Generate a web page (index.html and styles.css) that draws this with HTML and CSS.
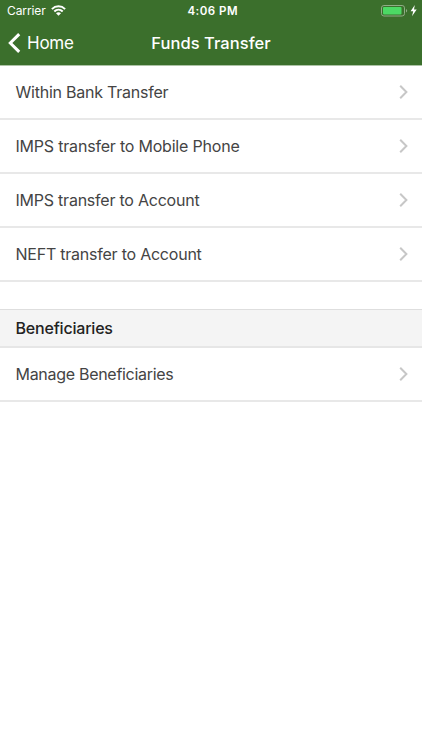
FILE: index.html
```html
<!DOCTYPE html>
<html lang="en">
<head>
<meta charset="utf-8">
<title>Funds Transfer</title>
<link rel="stylesheet" href="styles.css">
</head>
<body>
<header class="header">
  <div class="status">
    <div class="carrier"><span>Carrier</span>
      <svg class="wifi" width="15" height="11" viewBox="0 0 15 11" fill="none" stroke="#fff" stroke-width="2"><path d="M.9 4.1C4.6.4 10.4.4 14.1 4.1M3.3 6.5c2.4-2.3 6-2.3 8.4 0"/><path d="M5 8.2c1.4-1.3 3.6-1.3 5 0L7.5 10.8z" fill="#fff" stroke="none"/></svg>
    </div>
    <div class="time">4:06 PM</div>
    <div class="power">
      <svg width="36" height="12" viewBox="0 0 36 12"><rect x=".5" y=".5" width="23" height="10.5" rx="2.4" fill="none" stroke="#91ac87"/><rect x="2" y="2" width="18.5" height="7.5" rx="1" fill="#4cd964"/><path d="M25 4c1.6.5 1.6 3 0 3.5z" fill="#91ac87"/><path d="M33.8 0L29.6 6.2H32.2L31 11.2 35.7 4.6H33z" fill="#fff"/></svg>
    </div>
  </div>
  <nav class="nav">
    <a class="back"><svg width="13" height="20" viewBox="0 0 13 20" fill="none" stroke="#fff" stroke-width="3"><path d="M11.2 1.1L2.3 10l8.9 8.9"/></svg><span>Home</span></a>
    <h1 class="title">Funds Transfer</h1>
  </nav>
</header>
<main>
  <ul class="list">
    <li class="row"><span>Within Bank Transfer</span><svg class="chevron" viewBox="0 0 9 15"><path d="M1.2 .8l6.2 6.2L1.2 13.2"/></svg></li>
    <li class="row"><span class="wide">IMPS transfer to Mobile Phone</span><svg class="chevron" viewBox="0 0 9 15"><path d="M1.2 .8l6.2 6.2L1.2 13.2"/></svg></li>
    <li class="row"><span>IMPS transfer to Account</span><svg class="chevron" viewBox="0 0 9 15"><path d="M1.2 .8l6.2 6.2L1.2 13.2"/></svg></li>
    <li class="row"><span>NEFT transfer to Account</span><svg class="chevron" viewBox="0 0 9 15"><path d="M1.2 .8l6.2 6.2L1.2 13.2"/></svg></li>
  </ul>
  <h2 class="section"><span>Beneficiaries</span></h2>
  <ul class="list">
    <li class="row"><span class="narrow">Manage Beneficiaries</span><svg class="chevron" viewBox="0 0 9 15"><path d="M1.2 .8l6.2 6.2L1.2 13.2"/></svg></li>
  </ul>
</main>
</body>
</html>
```
FILE: styles.css
```css
* { box-sizing: border-box; }
body {
  margin: 0;
  background: #fff;
  color: #444;
  font-family: Inter, "Liberation Sans", sans-serif;
  font-size: 16px;
}
.header {
  height: 66px;
  background: #3b6f2c;
  background-clip: padding-box;
  border-bottom: 1px solid #adc3a6;
  color: #fff;
}
.status {
  height: 22px;
  display: grid;
  grid-template-columns: 1fr auto 1fr;
  align-items: center;
  padding: 0 5px 0 7px;
  font-size: 12px;
  line-height: 22px;
}
.carrier { display: flex; align-items: center; gap: 5px; letter-spacing: -.1px; }
.wifi { margin-bottom: 2px; }
.time { padding-left: 1.5px; font-weight: 600; font-size: 11.5px; letter-spacing: .5px; }
.power { display: flex; justify-content: flex-end; }
.nav {
  height: 42px;
  display: grid;
  grid-template-columns: 1fr auto 1fr;
  align-items: center;
  padding: 0 8px;
}
.back { display: flex; align-items: center; gap: 6px; font-size: 17px; letter-spacing: -.25px; }
.title { margin: 0; font-size: 16.5px; font-weight: 500; letter-spacing: .05px; }
.list { margin: 0; padding: 0; list-style: none; }
.row {
  height: 54px;
  display: flex;
  align-items: center;
  justify-content: space-between;
  padding: 0 14px 0 15.5px;
  border-bottom: 2px solid #e8e8e8;
  letter-spacing: -.23px;
}
.wide { letter-spacing: -.2px; }
.narrow { letter-spacing: -.29px; }
.chevron { width: 9px; height: 15px; fill: none; stroke: #c7c7c7; stroke-width: 2; }
.section {
  display: flex;
  align-items: center;
  height: 39px;
  margin: 27px 0 0;
  padding: 0 15.5px;
  background: #f4f4f4;
  border-top: 1px solid #dedede;
  border-bottom: 2px solid #e6e6e6;
  color: #222;
  font-size: 16px;
  font-weight: 500;
  letter-spacing: -.2px;
}
```
